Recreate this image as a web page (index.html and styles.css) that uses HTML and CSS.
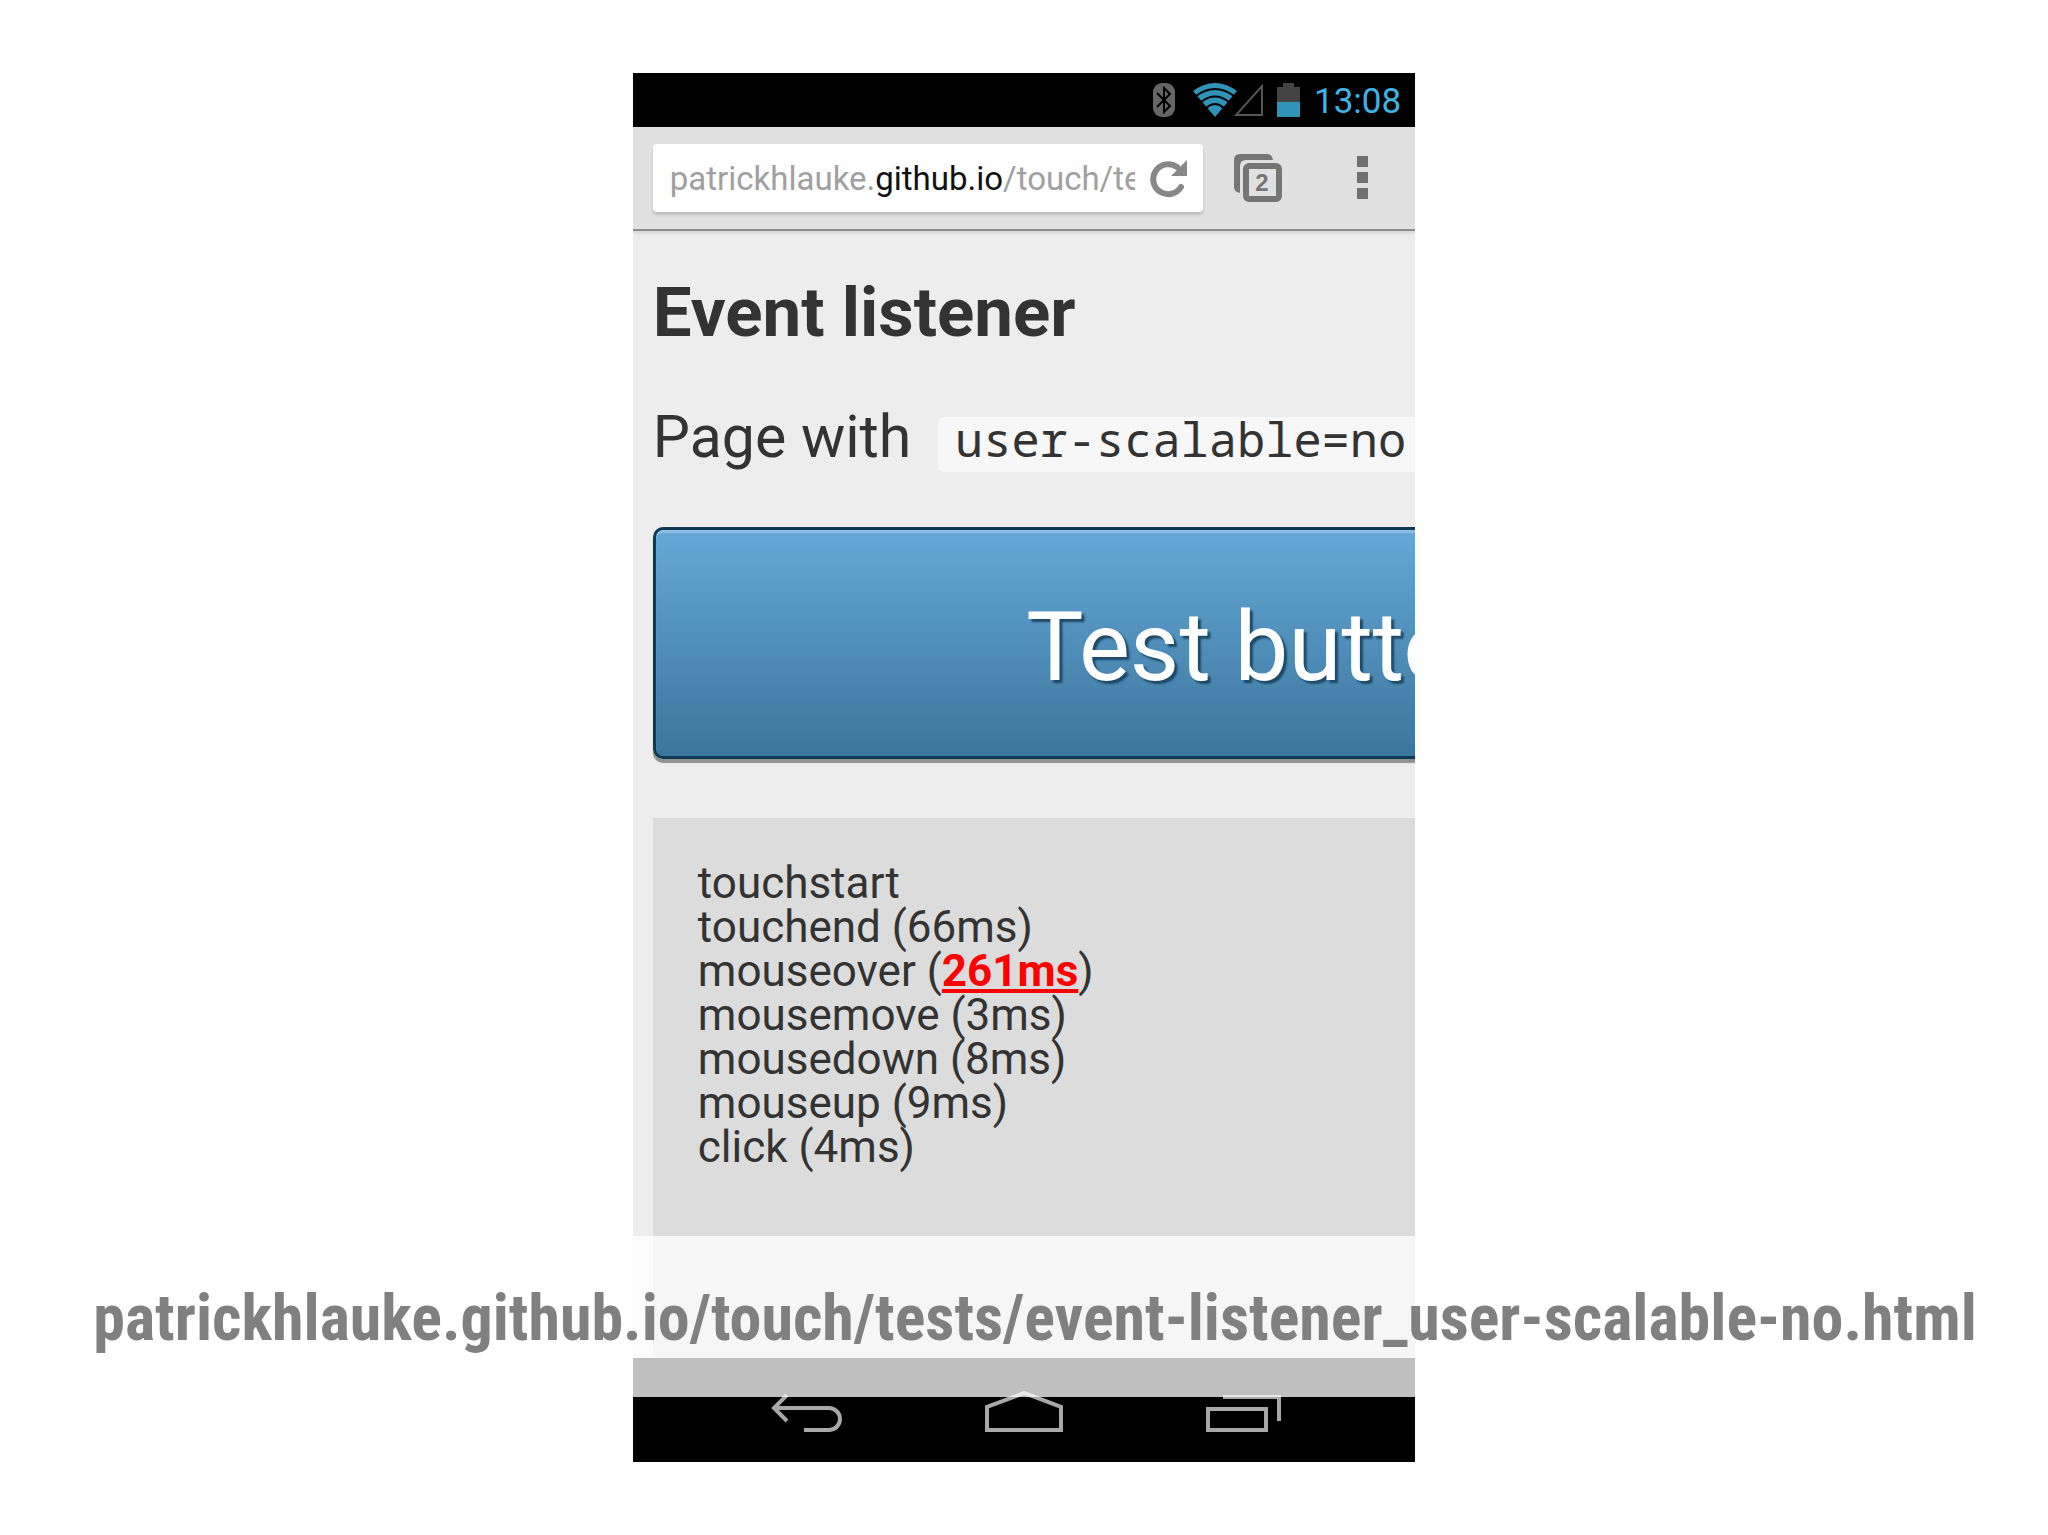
FILE: index.html
```
<!DOCTYPE html>
<html lang="en">
	<head>
		<meta charset="utf-8">
		<title>Event listener</title>
		<link rel="stylesheet" href="styles.css">
	</head>
	<body>
		<div class="slide">
			<div class="phone">
				<div class="status">
					<svg class="bluetooth" width="22" height="34" viewBox="0 0 22 34">
						<rect width="22" height="34" rx="9" fill="#666"/>
						<path d="M4 10 L17 23 L11 29 V5 L17 11 L4 24" fill="none" stroke="#000" stroke-width="2"/>
					</svg>
					<svg class="wifi" width="44" height="34" viewBox="0 0 44 34">
						<path d="M0 8 Q22 -8 44 8 L22 34 Z" fill="#3093b8"/>
						<path d="M3 13 Q22 -1 41 13 M8 19 Q22 8 36 19 M13 25 Q22 17 31 25" fill="none" stroke="#000" stroke-width="2"/>
					</svg>
					<svg class="signal" width="30" height="34" viewBox="0 0 30 34">
						<path d="M2 32 H28 V3 Z" fill="none" stroke="#555" stroke-width="2"/>
					</svg>
					<svg class="battery" width="23" height="34" viewBox="0 0 23 34">
						<path d="M0 4 H6 V0 H17 V4 H23 V34 H0 Z" fill="#444"/>
						<path d="M0 19 H23 V34 H0 Z" fill="#3093b8"/>
					</svg>
					<time class="clock">13:08</time>
				</div>
				<div class="toolbar">
					<div class="omnibox">
						<div class="url" role="textbox" aria-label="Address" contenteditable="true" spellcheck="false">patrickhlauke.<span class="host">github.io</span>/touch/tests</div>
						<button class="icon" type="button" aria-label="Reload">
							<svg width="40" height="38" viewBox="0 0 40 38">
								<path d="M32 27 A15 15 0 1 1 28 7" fill="none" stroke="#878787" stroke-width="6" stroke-linecap="round"/>
								<path d="M38 0 V16 H22 Z" fill="#878787"/>
							</svg>
						</button>
					</div>
					<button class="icon tabs" type="button" aria-label="Tabs">
						<svg width="48" height="48" viewBox="0 0 48 48">
							<path d="M6 39 Q0 38 0 33 V6 Q0 0 6 0 H33 Q38 0 39 6 H12 Q6 6 6 12 Z" fill="#757575"/>
							<rect x="12" y="12" width="33" height="33" rx="3" fill="none" stroke="#757575" stroke-width="6"/>
							<text class="count" x="28" y="37" text-anchor="middle">2</text>
						</svg>
					</button>
					<button class="icon menu" type="button" aria-label="Menu">
						<svg width="12" height="44" viewBox="0 0 12 44">
							<path d="M0 0 H11 V11 H0 Z M0 16 H11 V27 H0 Z M0 32 H11 V43 H0 Z" fill="#707070"/>
						</svg>
					</button>
				</div>
				<div class="page">
					<h1>Event listener</h1>
					<p class="intro">Page with <code>user-scalable=no</code></p>
					<button class="test" type="button">Test button</button>
					<div class="log">
						<div>touchstart</div>
						<div>touchend (66ms)</div>
						<div>mouseover (<strong>261ms</strong>)</div>
						<div>mousemove (3ms)</div>
						<div>mousedown (8ms)</div>
						<div>mouseup (9ms)</div>
						<div>click (4ms)</div>
					</div>
				</div>
				<div class="nav">
					<button class="icon" type="button" aria-label="Back">
						<svg width="80" height="48" viewBox="0 0 80 48">
							<path d="M22 9 L9 22 L22 35 M9 22 H64 A11 11 0 0 1 64 44 H39" fill="none" stroke="#a8a8a8" stroke-width="4"/>
						</svg>
					</button>
					<button class="icon" type="button" aria-label="Home">
						<svg width="80" height="48" viewBox="0 0 80 48">
							<path d="M3 44 V21 L40 7 L77 21 V44 Z" fill="none" stroke="#a8a8a8" stroke-width="4"/>
						</svg>
					</button>
					<button class="icon" type="button" aria-label="Recent apps">
						<svg width="80" height="48" viewBox="0 0 80 48">
							<path d="M5 23 H63 V44 H5 Z M20 11 H76 V35" fill="none" stroke="#a8a8a8" stroke-width="4"/>
						</svg>
					</button>
				</div>
			</div>
			<div class="caption">
				<a href="#">patrickhlauke.github.io/touch/tests/event-listener_user-scalable-no.html</a>
			</div>
		</div>
	</body>
</html>
```
FILE: styles.css
```
body {
	margin: 0;
	background: #fefefe;
	color: #333;
	font-family: Roboto, "Liberation Sans", sans-serif;
}
.slide {
	position: relative;
	box-sizing: border-box;
	min-height: 100vh;
	padding: 73px 0;
	display: flex;
	justify-content: center;
	overflow: hidden;
}
.phone {
	width: 38.2%;
	display: flex;
	flex-direction: column;
	overflow: hidden;
	background: #ededed;
}
.icon {
	display: flex;
	justify-content: center;
	align-items: center;
	padding: 0;
	border: 0;
	background: none;
	cursor: pointer;
}

/* status bar */
.status {
	display: flex;
	justify-content: flex-end;
	align-items: center;
	height: 54px;
	padding-right: 14px;
	background: #000;
}
.wifi {
	margin-left: 18px;
}
.signal {
	margin-left: -3px;
}
.battery {
	margin: 0 14px 0 13px;
}
.clock {
	color: #3db4e4;
	font-size: 35px;
	line-height: 50px;
	padding-top: 4px;
}

/* browser toolbar */
.toolbar {
	display: flex;
	align-items: center;
	height: 102px;
	padding: 0 46px 0 20px;
	background: #e0e0e0;
	border-bottom: 2px solid #8c8c8c;
	box-shadow: 0 2px 3px rgba(0, 0, 0, 0.1);
}
.omnibox {
	flex: 1;
	min-width: 0;
	display: flex;
	align-items: center;
	height: 68px;
	padding: 2px 14px 0 17px;
	box-sizing: border-box;
	background: #fefefe;
	border-radius: 4px;
	box-shadow: 0 3px 3px rgba(0, 0, 0, 0.15);
}
.url {
	flex: 1;
	min-width: 0;
	margin-right: 14px;
	overflow: hidden;
	white-space: nowrap;
	color: #a0a0a0;
	font-size: 33px;
	line-height: 44px;
}
.host {
	color: #111;
}
.tabs {
	margin-left: 31px;
}
.menu {
	margin-left: 75px;
}
.count {
	fill: #757575;
	font-size: 24px;
	font-weight: bold;
}

/* test page, wider than the viewport */
.page {
	flex: 1;
	display: flex;
	flex-direction: column;
	width: 160%;
	padding: 42px 0 0 20px;
	box-sizing: border-box;
}
h1 {
	margin: 0 0 44px;
	font-size: 69px;
	line-height: 80px;
}
.intro {
	margin: 0 0 50px;
	font-size: 59px;
	line-height: 80px;
}
code {
	display: inline-block;
	margin-left: 12px;
	padding: 0 17px 11px;
	background: #f7f7f7;
	border-radius: 6px;
	font-family: "Noto Sans Mono", "Droid Sans Mono", "Liberation Mono", monospace;
	font-size: 47px;
	line-height: 44px;
}
.test {
	height: 232px;
	margin: 0 0 59px;
	padding-top: 8px;
	border: 3px solid #103a54;
	border-radius: 10px;
	background: linear-gradient(#66a8d8, #3a769c);
	box-shadow: 0 4px 1px #909090, inset 0 3px 1px #8cc0e6;
	color: #fff;
	font-family: inherit;
	font-size: 96px;
	text-shadow: 3px 3px 2px #1d4a68;
	cursor: pointer;
}
.log {
	flex: 1;
	padding: 43px 45px;
	background: #dcdcdc;
	font-size: 44px;
	line-height: 44px;
}
.log strong {
	color: #f00;
	text-decoration: underline;
}

/* system buttons */
.nav {
	display: flex;
	justify-content: center;
	height: 104px;
	background: #000;
}
.nav .icon {
	width: 28%;
}

/* caption strip over the lower part of the phone */
.caption {
	position: absolute;
	left: 0;
	right: 0;
	bottom: 138px;
	padding: 4px 0 0 22px;
	background: rgba(255, 255, 255, 0.75);
	font-family: "Roboto Condensed", "Liberation Sans Narrow", "Arial Narrow", sans-serif;
	font-size: 64px;
	font-weight: bold;
	line-height: 157px;
	text-align: center;
	white-space: nowrap;
}
.caption a {
	color: #808080;
	text-decoration: none;
}
```
